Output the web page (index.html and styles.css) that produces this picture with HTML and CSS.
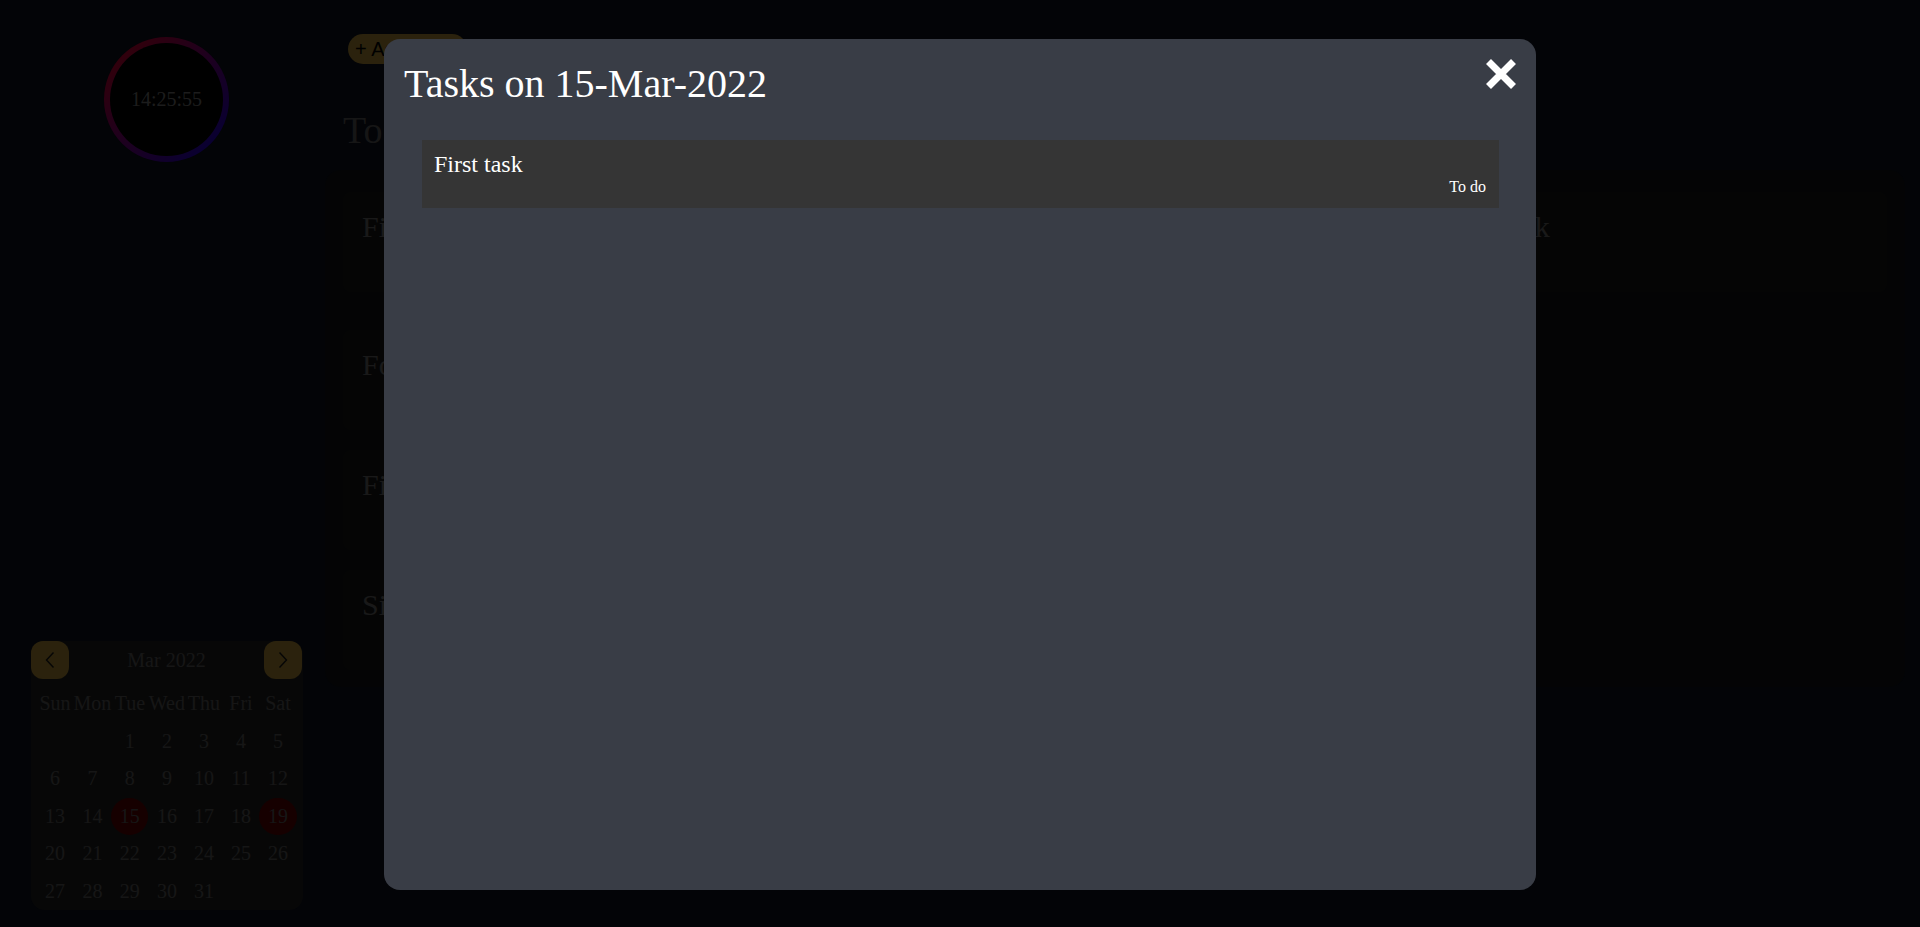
FILE: index.html
```html
<!DOCTYPE html>
<html lang="en">
<head>
<meta charset="utf-8">
<title>Tasks</title>
<link rel="stylesheet" href="styles.css">
</head>
<body>
<div class="app">
  <aside class="sidebar">
    <div class="clock"><span class="clock-time">14:25:55</span></div>
    <div class="calendar">
      <div class="cal-head">
        <button class="cal-nav" aria-label="Previous month"><svg width="10" height="18" viewBox="0 0 10 18"><polyline points="8.5,1.5 1.5,9 8.5,16.5" /></svg></button>
        <span class="cal-title">Mar 2022</span>
        <button class="cal-nav" aria-label="Next month"><svg width="10" height="18" viewBox="0 0 10 18"><polyline points="1.5,1.5 8.5,9 1.5,16.5" /></svg></button>
      </div>
      <div class="cal-grid">
        <span class="cal-dow">Sun</span><span class="cal-dow">Mon</span><span class="cal-dow">Tue</span><span class="cal-dow">Wed</span><span class="cal-dow">Thu</span><span class="cal-dow">Fri</span><span class="cal-dow">Sat</span>
        <span class="cal-day"></span><span class="cal-day"></span><span class="cal-day">1</span><span class="cal-day">2</span><span class="cal-day">3</span><span class="cal-day">4</span><span class="cal-day">5</span>
        <span class="cal-day">6</span><span class="cal-day">7</span><span class="cal-day">8</span><span class="cal-day">9</span><span class="cal-day">10</span><span class="cal-day">11</span><span class="cal-day">12</span>
        <span class="cal-day">13</span><span class="cal-day">14</span><span class="cal-day marked">15</span><span class="cal-day">16</span><span class="cal-day">17</span><span class="cal-day">18</span><span class="cal-day marked">19</span>
        <span class="cal-day">20</span><span class="cal-day">21</span><span class="cal-day">22</span><span class="cal-day">23</span><span class="cal-day">24</span><span class="cal-day">25</span><span class="cal-day">26</span>
        <span class="cal-day">27</span><span class="cal-day">28</span><span class="cal-day">29</span><span class="cal-day">30</span><span class="cal-day">31</span><span class="cal-day"></span><span class="cal-day"></span>
      </div>
    </div>
  </aside>
  <main class="main">
    <button class="add-btn">+ Add Task</button>
    <h1 class="main-title">To do</h1>
    <section class="board">
      <div class="board-row board-row-first">
        <div class="board-card">First task</div>
        <div class="board-card">Second task</div>
        <div class="board-card">Third task</div>
      </div>
      <div class="board-row"><div class="board-card">Fourth task</div></div>
      <div class="board-row"><div class="board-card">Fifth task</div></div>
      <div class="board-row"><div class="board-card">Sixth task</div></div>
    </section>
  </main>
</div>
<div class="overlay">
  <div class="modal">
    <div class="modal-head">
      <h2 class="modal-title">Tasks on 15-Mar-2022</h2>
      <button class="modal-close" aria-label="Close"><svg width="30" height="30" viewBox="0 0 30 30"><path d="M2.5 2.5 L27.5 27.5 M27.5 2.5 L2.5 27.5" /></svg></button>
    </div>
    <ul class="modal-list">
      <li class="modal-task">
        <span class="modal-task-title">First task</span>
        <span class="modal-task-status">To do</span>
      </li>
    </ul>
  </div>
</div>
</body>
</html>
```
FILE: styles.css
```css
* { box-sizing: border-box; }
html, body { margin: 0; height: 100%; }
body {
  background: #0f1423;
  font-family: "Liberation Serif", "Times New Roman", serif;
  color: #7d7d7d;
  overflow: hidden;
}
button { font-family: inherit; cursor: pointer; }

.app { display: flex; height: 100vh; }

/* sidebar */
.sidebar {
  width: 325px;
  flex: none;
  display: flex;
  flex-direction: column;
  align-items: center;
  padding: 37px 0 17px 8px;
}
.clock {
  width: 125px;
  height: 125px;
  border-radius: 50%;
  border: 6px solid transparent;
  background: linear-gradient(#000, #000) padding-box,
              linear-gradient(135deg, #ff0030 10%, #2400ff 90%) border-box;
  display: flex;
  align-items: center;
  justify-content: center;
}
.clock-time { font-size: 20px; color: #8c8c8c; }

.calendar {
  margin-top: auto;
  width: 272px;
  background: #262626;
  border-radius: 14px;
}
.cal-head {
  display: flex;
  align-items: center;
  justify-content: space-between;
  height: 38px;
}
.cal-nav {
  width: 38px;
  height: 38px;
  border: 0;
  border-radius: 12px;
  background: #d4aa40;
  padding: 0;
  display: flex;
  align-items: center;
  justify-content: center;
}
.cal-nav svg polyline { fill: none; stroke: #1c1c1c; stroke-width: 1.4; }
.cal-title { font-size: 20px; color: #6e6e6e; }
.cal-grid {
  display: grid;
  grid-template-columns: repeat(7, 1fr);
  grid-auto-rows: 37.5px;
  padding: 6px 6px 0;
}
.cal-dow, .cal-day {
  display: flex;
  align-items: center;
  justify-content: center;
  font-size: 20px;
  color: #6e6e6e;
}
.cal-day.marked { background: #6e0000; border-radius: 50%; }

/* main */
.main {
  flex: 1;
  padding: 34px 15px 0 0;
  display: flex;
  flex-direction: column;
  align-items: flex-start;
}
.add-btn {
  margin-left: 23px;
  height: 30px;
  border: 0;
  border-radius: 15px;
  background: #d4aa40;
  color: #000;
  font-family: "Liberation Sans", Arial, sans-serif;
  font-size: 20px;
  padding: 0 14px 0 7px;
}
.main-title {
  margin: 44px 0 0 18px;
  font-size: 38px;
  font-weight: normal;
  line-height: normal;
  color: #6e6e6e;
}
.board {
  align-self: stretch;
  margin-top: 18px;
  background: #14171d;
  border-radius: 16px;
  padding: 22px 18px 17px;
  display: flex;
  flex-direction: column;
  gap: 20px;
}
.board-row { display: flex; gap: 16px; }
.board-row-first { margin-bottom: 18px; justify-content: space-between; }
.board-card {
  width: 31%;
  min-height: 100px;
  padding: 18px 19px;
  font-size: 30px;
  background: #1c1c1c;
  border-radius: 8px;
}

/* modal */
.overlay {
  position: fixed;
  inset: 0;
  background: rgba(0, 0, 0, 0.8);
  display: flex;
  justify-content: center;
  align-items: flex-start;
  padding-top: 39px;
}
.modal {
  width: 1152px;
  height: 851px;
  background: #393d46;
  border-radius: 16px;
  padding: 21px 20px;
  color: #fff;
  display: flex;
  flex-direction: column;
}
.modal-head {
  display: flex;
  justify-content: space-between;
  align-items: flex-start;
}
.modal-title {
  margin: 0;
  font-size: 40px;
  font-weight: normal;
  line-height: normal;
}
.modal-close {
  background: none;
  border: 0;
  padding: 0;
  margin-top: -1px;
  width: 30px;
  height: 30px;
}
.modal-close svg { display: block; }
.modal-close path { stroke: #fff; stroke-width: 7; stroke-linecap: butt; fill: none; }
.modal-list {
  list-style: none;
  margin: 33px 17px 0 18px;
  padding: 0;
}
.modal-task {
  background: #353535;
  padding: 11px 13px 12px 12px;
  display: flex;
  flex-direction: column;
}
.modal-task-title { font-size: 24px; }
.modal-task-status { font-size: 16px; align-self: flex-end; }
```
